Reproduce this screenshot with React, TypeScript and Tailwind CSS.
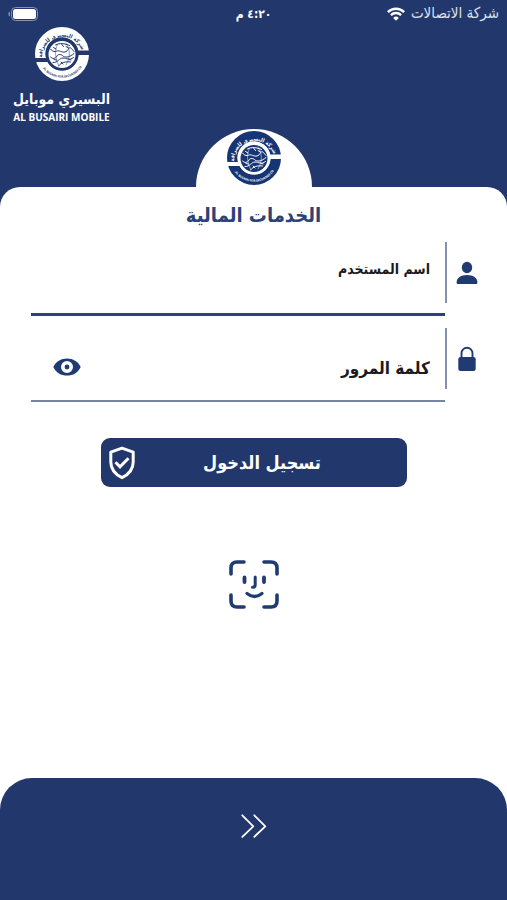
import { useId, useState } from "react";
import { clsx } from "clsx";

interface EmblemProps {
    className?: string;
    ink: string;
    paper: string;
}

// Round company seal: split ring with lettering around a globe
function Emblem({ className, ink, paper }: EmblemProps) {
    const id = useId();

    return (
        <svg viewBox="0 0 108 108" className={className} aria-hidden="true">
            <defs>
                <path id={`${id}-top`} d="M14 63A41 41 0 0 1 94 48" />
                <path id={`${id}-bottom`} d="M9 69A47 47 0 0 0 99 67" />
            </defs>
            <circle cx="54" cy="54" r="43.500" fill="none" stroke={ink} strokeWidth="21" />
            <path d="M54 47H108V56H54zM0 62H54V70H0z" fill={paper} />
            <circle cx="54" cy="54" r="33" fill={paper} />
            <circle cx="54" cy="55" r="27" fill={ink} />
            <g fill="none" stroke={paper} strokeLinecap="round">
                <path d="M31 44C38 54 43 46 49 48S61 53 66 45 73 44 78 49" strokeWidth="2" />
                <path d="M31 60c5 5 10 3 13-2s9-3 12 0 12 4 22-5" strokeWidth="2" />
                <path d="M36 71c10 1 12-9 20-9s12 6 21-1M47 78c6-8 14-9 24-8" strokeWidth="2" />
                <path d="M41 36c9-5 18-3 28 1M37 41l5 3M62 39l5 3M53 34l4 5M38 65l5 1M68 65l4 1M52 70l4 4" strokeWidth="2" />
                <path d="M45 35c-7 12-4 27 2 41M62 32c9 13 9 29 0 44" strokeWidth="1" />
            </g>
            <text direction="rtl" fill={paper} fontSize="11" fontWeight="700" fontFamily="DejaVu Sans Condensed, DejaVu Sans, sans-serif" textAnchor="middle">
                <textPath href={`#${id}-top`} startOffset="50%">شركة البسيري للصرافة</textPath>
            </text>
            <text fill={paper} fontSize="6" fontWeight="700" fontFamily="Open Sans, sans-serif" textAnchor="middle">
                <textPath href={`#${id}-bottom`} startOffset="50%">AL BUSAIRI FOR EXCHANGE CO.</textPath>
            </text>
        </svg>
    );
}

function BatteryIcon() {
    return (
        <svg viewBox="0 0 30 14" className="h-[14px] w-[30px]" aria-hidden="true">
            <rect x="3.5" y=".5" width="26" height="13" rx="4" fill="none" stroke="#8592b3" />
            <rect x="5" y="2" width="23" height="10" rx="2.5" fill="#fff" />
            <path d="M2 4.500Q.3 5.200.3 7T2 9.500z" fill="#8592b3" />
        </svg>
    );
}

function WifiIcon() {
    return (
        <svg viewBox="0 0 18 14" className="h-[14px] w-[18px]" fill="none" stroke="#fff" strokeWidth="2.400" aria-hidden="true">
            <path d="M.9 5.100a11.600 11.600 0 0 1 16.200 0M3.900 8.100a7.300 7.300 0 0 1 10.200 0" />
            <path d="M9 13.700 6.200 10.900a4 4 0 0 1 5.600 0z" fill="#fff" stroke="none" />
        </svg>
    );
}

function UserIcon() {
    return (
        <svg viewBox="0 0 22 24" className="h-6 w-[22px]" fill="#203a72" aria-hidden="true">
            <ellipse cx="11" cy="6.500" rx="5.200" ry="5.800" />
            <path d="M.6 21.500C.6 16.700 5 14 11 14s10.400 2.700 10.400 7.500c0 1-.5 1.500-1.500 1.500H2.100C1.100 23 .6 22.500.6 21.500z" />
        </svg>
    );
}

function LockIcon() {
    return (
        <svg viewBox="0 0 20 26" className="h-[26px] w-5" aria-hidden="true">
            <path d="M4.500 12V7.200a5.500 5.500 0 0 1 11 0V12" fill="none" stroke="#203a72" strokeWidth="1.900" />
            <rect x="1.300" y="11" width="17.400" height="14" rx="2.200" fill="#203a72" />
        </svg>
    );
}

function EyeIcon() {
    return (
        <svg viewBox="0 0 28 18" className="h-[18px] w-7" aria-hidden="true">
            <path d="M.3 9C3 3.200 8 .4 14 .4S25 3.200 27.700 9C25 14.800 20 17.600 14 17.600S3 14.800.3 9z" fill="#203a72" />
            <circle cx="14" cy="9" r="4.200" fill="none" stroke="#fff" strokeWidth="3.600" />
        </svg>
    );
}

function ShieldIcon() {
    return (
        <svg viewBox="0 0 28 34" className="h-[34px] w-7" fill="none" stroke="#fff" strokeWidth="3" aria-hidden="true">
            <path d="M14 2.200 25.200 6.200V16c0 7.500-4.700 12.500-11.200 15.700C7.500 28.500 2.800 23.500 2.800 16V6.200z" strokeLinejoin="round" />
            <path d="m7.500 16.300 4.500 4.500 8.500-8.600" />
        </svg>
    );
}

function FaceIdIcon() {
    return (
        <svg viewBox="0 0 50 50" className="size-[50px]" fill="none" stroke="#203a72" strokeLinecap="round" aria-hidden="true">
            <path d="M2 14V8q0-6 6-6h7M35 2h7q6 0 6 6v6M48 35v6q0 6-6 6h-7M15 47H8q-6 0-6-6v-6" strokeWidth="3.600" />
            <path d="M15.500 17.500v4.500M35 17.500v4.500" strokeWidth="3.800" />
            <path d="M26.200 17v8q0 2.300-2.700 2.300" strokeWidth="3" />
            <path d="M18 33.500q7.500 6 15 0" strokeWidth="3.200" />
        </svg>
    );
}

export default function App() {
    const [showPassword, setShowPassword] = useState(false);

    return (
        <div dir="rtl" className="flex min-h-screen flex-col bg-[#22386c] font-['DejaVu_Sans_Condensed','DejaVu_Sans',sans-serif] text-white">
            <header>
                <div className="grid h-[27px] grid-cols-3 items-center px-2 text-[15px]">
                    <div className="flex items-center gap-[6px] whitespace-nowrap text-[#dce2ef]">
                        <span>شركة الاتصالات</span>
                        <WifiIcon />
                    </div>
                    <time className="text-center text-[12px] font-bold">٤:٢٠ م</time>
                    <div className="flex justify-end">
                        <BatteryIcon />
                    </div>
                </div>
                <div className="flex h-[102px] justify-end px-[13px]">
                    <div className="flex flex-col items-center whitespace-nowrap">
                        <Emblem className="size-[54px]" ink="#fff" paper="#22386c" />
                        <p className="mt-2 text-[14px] leading-5 font-bold">البسيري موبايل</p>
                        <p dir="ltr" className="font-['Open_Sans',sans-serif] text-[10px] leading-4 font-bold">AL BUSAIRI MOBILE</p>
                    </div>
                </div>
                <div className="mx-auto flex h-[58px] w-[116px] items-center justify-center rounded-t-full bg-white">
                    <Emblem className="size-[54px]" ink="#173574" paper="#fff" />
                </div>
            </header>

            <main className="flex flex-1 flex-col rounded-t-[20px] bg-white">
                <h1 className="mt-3 text-center text-[20px] leading-8 font-bold text-[#2b4377]">الخدمات المالية</h1>

                <form className="mt-[11px] flex flex-col" onSubmit={(e) => e.preventDefault()}>
                    <div className="flex flex-col gap-3 pr-5 pl-[31px]">
                        <div className="flex items-start">
                            <label htmlFor="username" aria-label="اسم المستخدم" className="flex h-[61px] w-10 items-center justify-center">
                                <UserIcon />
                            </label>
                            <div className="h-[61px] w-[2px] bg-[#8491b0]" />
                            <div className="flex h-[74px] flex-1 items-start border-b-[3px] border-[#2d4377] pr-[15px]">
                                <input
                                    id="username"
                                    type="text"
                                    placeholder="اسم المستخدم"
                                    className="h-[54px] w-full text-[14px] font-bold text-[#1b1b1f] outline-none placeholder:text-[#1b1b1f]"
                                />
                            </div>
                        </div>

                        <div className="flex items-start">
                            <label htmlFor="password" aria-label="كلمة المرور" className="flex h-[61px] w-10 items-center justify-center">
                                <LockIcon />
                            </label>
                            <div className="h-[61px] w-[2px] bg-[#8491b0]" />
                            <div className="flex h-[74px] flex-1 items-end border-b-2 border-[#7483a7] pr-[15px] pl-[22px]">
                                <input
                                    id="password"
                                    type={showPassword ? "text" : "password"}
                                    placeholder="كلمة المرور"
                                    className="h-[64px] w-full min-w-0 text-[17px] font-bold text-[#1b1b1f] outline-none placeholder:text-[#1b1b1f]"
                                />
                                <button
                                    type="button"
                                    aria-label="إظهار كلمة المرور"
                                    aria-pressed={showPassword}
                                    onClick={() => setShowPassword((prev) => !prev)}
                                    className={clsx("flex h-[66px] shrink-0 items-center", showPassword && "opacity-60")}
                                >
                                    <EyeIcon />
                                </button>
                            </div>
                        </div>
                    </div>

                    <button
                        type="submit"
                        className="mx-auto mt-9 flex h-[49px] w-full max-w-[306px] items-center rounded-[9px] bg-[#22386c] pr-[18px] pl-[7px] text-[18px] font-bold"
                    >
                        <span className="flex-1 text-center">تسجيل الدخول</span>
                        <ShieldIcon />
                    </button>
                </form>

                <button type="button" aria-label="الدخول ببصمة الوجه" className="mx-auto mt-[73px] mb-10">
                    <FaceIdIcon />
                </button>

                <footer className="mt-auto flex h-[122px] justify-center rounded-t-[32px] bg-[#22386c] pt-[36px]">
                    <button type="button" aria-label="التالي" className="h-6">
                        <svg viewBox="0 0 26 24" className="h-6 w-[26px]" fill="none" stroke="#fff" strokeWidth="1.800" strokeLinecap="round" strokeLinejoin="round" aria-hidden="true">
                            <path d="m1.300 1.300 11 11-11 10.500M13.300 1.300l11 11-11 10.500" />
                        </svg>
                    </button>
                </footer>
            </main>
        </div>
    );
}
